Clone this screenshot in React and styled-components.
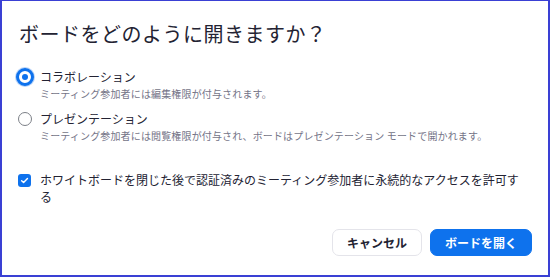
import React, { useState } from "react";
import styled, { createGlobalStyle } from "styled-components";

const GlobalStyle = createGlobalStyle`
    html, body {
        margin: 0;
        padding: 0;
        background: #ffffff;
    }
    body {
        font-family: "Noto Sans CJK JP", "Noto Sans", sans-serif;
        color: #232333;
    }
`;

const Frame = styled.div`
    box-sizing: border-box;
    width: 550px;
    height: 277px;
    border: 2px solid #3a40d4;
    border-top-width: 1px;
    background: #ffffff;
    padding: 19px 16px 0 16px;
    display: flex;
    flex-direction: column;
`;

const Title = styled.h1`
    margin: 0 0 0 1px;
    font-size: 20px;
    line-height: 28px;
    font-weight: 400;
    color: #232333;
    letter-spacing: 0.5px;
`;

const Options = styled.div`
    margin-top: 20px;
    display: flex;
    flex-direction: column;
    gap: 8px;
`;

const OptionRow = styled.label`
    display: grid;
    grid-template-columns: 14px 1fr;
    column-gap: 8px;
    cursor: pointer;
`;

const RadioMark = styled.span`
    box-sizing: border-box;
    width: ${(p) => (p.$checked ? "18px" : "14px")};
    height: ${(p) => (p.$checked ? "18px" : "14px")};
    margin: ${(p) => (p.$checked ? "0 0 0 -2px" : "2px 0 0 0")};
    border-radius: 50%;
    border: ${(p) => (p.$checked ? "3px solid #0e72ed" : "1px solid #7c7f87")};
    background: #fff;
    display: flex;
    align-items: center;
    justify-content: center;
    box-shadow: ${(p) => (p.$checked ? "0 0 0 1px #b9d4f8" : "none")};

    &::after {
        content: "";
        display: ${(p) => (p.$checked ? "block" : "none")};
        width: 6px;
        height: 6px;
        border-radius: 50%;
        background: #0e72ed;
    }
`;

const OptionText = styled.div`
    display: flex;
    flex-direction: column;
`;

const OptionLabel = styled.div`
    font-size: 12px;
    line-height: 18px;
    color: #232333;
`;

const OptionDesc = styled.div`
    font-size: 10px;
    line-height: 16px;
    letter-spacing: 0.15px;
    color: #747487;
`;

const CheckRow = styled.label`
    margin-top: 27px;
    display: grid;
    grid-template-columns: 14px 1fr;
    column-gap: 8px;
    cursor: pointer;
`;

const CheckBox = styled.span`
    width: 13px;
    height: 13px;
    margin-top: 3px;
    border-radius: 3px;
    background: #0e72ed;
    display: flex;
    align-items: center;
    justify-content: center;
`;

const CheckText = styled.div`
    font-size: 12px;
    line-height: 17px;
    padding-right: 6px;
    color: #232333;
`;

const Footer = styled.div`
    margin-top: 24px;
    display: flex;
    justify-content: flex-end;
    gap: 8px;
`;

const Button = styled.button`
    height: 27px;
    padding: 0 14px;
    border-radius: 7px;
    font-family: "Noto Sans CJK JP", sans-serif;
    font-size: 12px;
    font-weight: 700;
    cursor: pointer;
    border: 1px solid ${(p) => (p.$primary ? "#0e72ed" : "#e4e4ea")};
    background: ${(p) => (p.$primary ? "#0e72ed" : "#ffffff")};
    color: ${(p) => (p.$primary ? "#ffffff" : "#232333")};
`;

const options = [
    {
        id: "collab",
        label: "コラボレーション",
        desc: "ミーティング参加者には編集権限が付与されます。",
    },
    {
        id: "present",
        label: "プレゼンテーション",
        desc: "ミーティング参加者には閲覧権限が付与され、ボードはプレゼンテーション モードで開かれます。",
    },
];

export default function App() {
    const [mode, setMode] = useState("collab");

    return (
        <>
            <GlobalStyle />
            <Frame>
                <Title>ボードをどのように開きますか？</Title>
                <Options>
                    {options.map((o) => (
                        <OptionRow key={o.id} onClick={() => setMode(o.id)}>
                            <RadioMark $checked={mode === o.id} />
                            <OptionText>
                                <OptionLabel>{o.label}</OptionLabel>
                                <OptionDesc>{o.desc}</OptionDesc>
                            </OptionText>
                        </OptionRow>
                    ))}
                </Options>
                <CheckRow>
                    <CheckBox>
                        <svg width="9" height="9" viewBox="0 0 10 10">
                            <path
                                d="M1.8 5.2 L4 7.3 L8.3 2.8"
                                fill="none"
                                stroke="#fff"
                                strokeWidth="1.6"
                                strokeLinecap="round"
                                strokeLinejoin="round"
                            />
                        </svg>
                    </CheckBox>
                    <CheckText>
                        ホワイトボードを閉じた後で認証済みのミーティング参加者に永続的なアクセスを許可する
                    </CheckText>
                </CheckRow>
                <Footer>
                    <Button>キャンセル</Button>
                    <Button $primary>ボードを開く</Button>
                </Footer>
            </Frame>
        </>
    );
}
